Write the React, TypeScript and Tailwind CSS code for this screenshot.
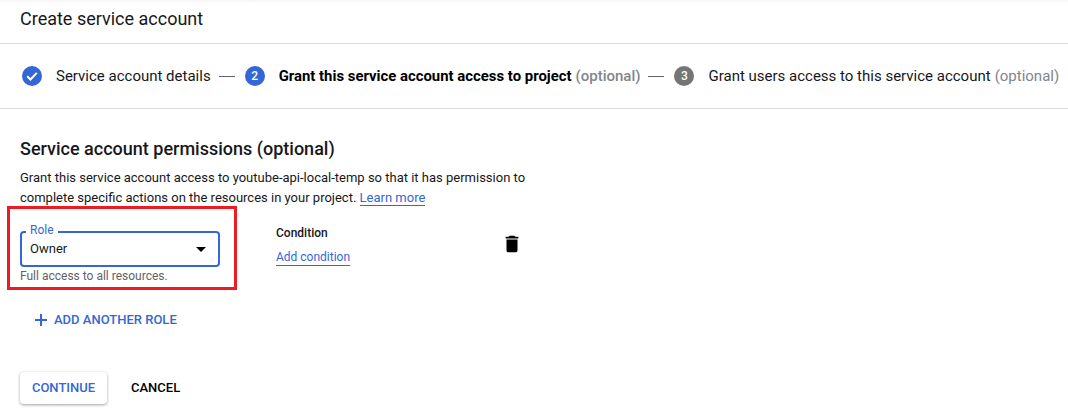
function Dash() {
  return <span className="ml-[8px] mr-[10px] h-px w-[16px] bg-[#5f6368]" />;
}

function StepNumber({ n, color }: { n: number; color: string }) {
  return (
    <span className={`flex h-5 w-5 items-center justify-center rounded-full text-[12px] font-medium text-white ${color}`}>
      {n}
    </span>
  );
}

export default function App() {
  return (
    <div className="h-[420px] w-[1068px] overflow-hidden bg-white font-['Roboto',sans-serif] text-[#17181a]">
      <header className="flex h-[44px] items-center border-b border-[#dadce0] bg-gradient-to-b from-[#f5f5f5] to-white to-[4px] pb-[6px] pl-[20px] text-[18px] leading-[24px]">
        Create service account
      </header>

      <div className="flex h-[65px] items-center whitespace-nowrap border-b border-[#dadce0] pl-[21px] text-[15px]">
        <svg width="22" height="22" viewBox="0 0 22 22" className="mr-[13px]">
          <circle cx="11" cy="11" r="10" fill="#3367d6" />
          <path d="M6.2 11.2l3.3 3.3 6.3-6.6" fill="none" stroke="#fff" strokeWidth="2" />
        </svg>
        <span>Service account details</span>
        <Dash />
        <StepNumber n={2} color="bg-[#3367d6]" />
        <span className="ml-[14px] text-[14.9px] font-bold text-black">Grant this service account access to project</span>
        <span className="ml-[4px] font-medium text-[#80868b]">(optional)</span>
        <Dash />
        <StepNumber n={3} color="bg-[#757575]" />
        <span className="ml-[14px]">Grant users access to this service account</span>
        <span className="ml-[4px] text-[#80868b]">(optional)</span>
      </div>

      <main className="pl-[20px]">
        <h2 className="mt-[28px] text-[18px] font-medium leading-[24px]">Service account permissions (optional)</h2>
        <p className="mt-[7px] w-[520px] text-[13px] leading-[20px]">
          Grant this service account access to youtube-api-local-temp so that it has permission to complete specific
          actions on the resources in your project.{" "}
          <a className="border-b border-[#3367d6] text-[#3367d6]">Learn more</a>
        </p>

        <div className="mt-[-2px] flex items-start">
          <div className="ml-[-13px] h-[84px] w-[230px] border-[3px] border-[#ed1c24] pl-[10px] pt-[22px]">
            <div className="relative flex h-[36px] w-[200px] items-center justify-between rounded-[4px] border-2 border-[#3367d6] pl-[8px] pr-[12px] text-[13px]">
              <span className="absolute left-[4px] top-[-10px] bg-white px-[4px] text-[12px] leading-[14px] text-[#3367d6]">
                Role
              </span>
              <span>Owner</span>
              <span className="h-0 w-0 border-x-[5px] border-t-[5px] border-x-transparent border-t-black" />
            </div>
            <div className="mt-[1px] text-[12px] leading-[16px] text-[#5f6368]">Full access to all resources.</div>
          </div>
          <div className="ml-[39px] mt-[19px] text-[12px]">
            <div className="font-medium leading-[16px]">Condition</div>
            <a className="mt-[9px] inline-block border-b border-[#3367d6] leading-[15px] text-[#3367d6]">Add condition</a>
          </div>
          <svg width="22" height="22" viewBox="0 0 24 24" className="ml-[151px] mt-[27px]" fill="#000">
            <path d="M6 19c0 1.1.9 2 2 2h8c1.1 0 2-.9 2-2V7H6v12zM19 4h-3.5l-1-1h-5l-1 1H5v2h14V4z" />
          </svg>
        </div>

        <button className="ml-[14px] mt-[22px] flex items-center text-[13px] font-medium leading-[16px] text-[#3367d6]">
          <svg width="14" height="14" viewBox="0 0 14 14" className="mr-[6px]">
            <path d="M7 1v12M1 7h12" stroke="#3367d6" strokeWidth="2" />
          </svg>
          ADD ANOTHER ROLE
        </button>

        <div className="mt-[44px] flex items-center text-[13px] font-medium">
          <button className="h-[32px] w-[87px] rounded-[4px] bg-white text-[#3367d6] shadow-[0_1px_3px_rgba(60,64,67,0.5)]">
            CONTINUE
          </button>
          <button className="ml-[24px] text-black">CANCEL</button>
        </div>
      </main>
    </div>
  );
}
